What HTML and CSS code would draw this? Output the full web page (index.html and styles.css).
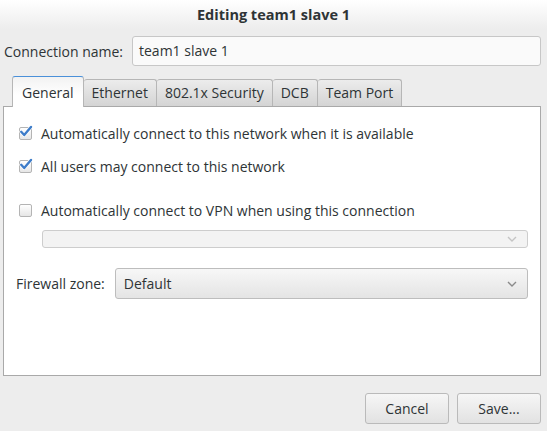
FILE: index.html
```html
<!DOCTYPE html>
<html>
<head>
<meta charset="utf-8">
<link rel="stylesheet" href="styles.css">
</head>
<body>
<div class="window">
  <div class="titlebar">Editing team1 slave 1</div>
  <div class="name-row">
    <span class="label">Connection name:</span>
    <div class="entry">team1 slave 1</div>
  </div>
  <div class="tabs">
    <div class="tab active">General</div>
    <div class="tab">Ethernet</div>
    <div class="tab">802.1x Security</div>
    <div class="tab">DCB</div>
    <div class="tab">Team Port</div>
  </div>
  <div class="panel">
    <div class="check-row first">
      <span class="cb checked"><svg width="14" height="13" viewBox="0 0 14 13"><path d="M2.2 6.8 L5.2 10 L12 2" fill="none" stroke="#ffffff" stroke-width="3.6" stroke-linecap="round" stroke-linejoin="round"/><path d="M2.2 6.8 L5.2 10 L12 2" fill="none" stroke="#3d7cc9" stroke-width="2.4" stroke-linecap="round" stroke-linejoin="round"/></svg></span>
      <span>Automatically connect to this network when it is available</span>
    </div>
    <div class="check-row second">
      <span class="cb checked"><svg width="14" height="13" viewBox="0 0 14 13"><path d="M2.2 6.8 L5.2 10 L12 2" fill="none" stroke="#ffffff" stroke-width="3.6" stroke-linecap="round" stroke-linejoin="round"/><path d="M2.2 6.8 L5.2 10 L12 2" fill="none" stroke="#3d7cc9" stroke-width="2.4" stroke-linecap="round" stroke-linejoin="round"/></svg></span>
      <span>All users may connect to this network</span>
    </div>
    <div class="check-row third">
      <span class="cb"></span>
      <span>Automatically connect to VPN when using this connection</span>
    </div>
    <div class="combo disabled">
      <span></span>
      <svg class="arrow" width="10" height="6" viewBox="0 0 10 6"><path d="M1 1 L5 5 L9 1" fill="none" stroke="#c4c4c4" stroke-width="1.4"/></svg>
    </div>
    <div class="fw-row">
      <span class="label">Firewall zone:</span>
      <div class="combo fw">
        <span>Default</span>
        <svg class="arrow" width="10" height="6" viewBox="0 0 10 6"><path d="M1 1 L5 5 L9 1" fill="none" stroke="#8a8a8a" stroke-width="1.4"/></svg>
      </div>
    </div>
  </div>
  <div class="buttons">
    <div class="btn">Cancel</div>
    <div class="btn">Save...</div>
  </div>
</div>
</body>
</html>
```

FILE: styles.css
```css
html, body {
  margin: 0;
  padding: 0;
  background: #ededed;
}
body {
  font-family: "Open Sans", "DejaVu Sans", sans-serif;
  font-size: 14px;
  color: #2e3436;
  width: 547px;
  height: 431px;
  overflow: hidden;
}
.window {
  display: flex;
  flex-direction: column;
}
.titlebar {
  height: 29px;
  line-height: 29px;
  text-align: center;
  font-weight: bold;
  font-size: 14.5px;
  background: linear-gradient(#ffffff, #ededed);
  color: #2e3436;
}
.name-row {
  display: flex;
  align-items: center;
  padding: 7px 6px 0 4px;
  gap: 9px;
}
.entry {
  flex: 1;
  height: 28px;
  line-height: 28px;
  border: 1px solid #c7c7c7;
  border-radius: 3px;
  background: #fafafa;
  padding-left: 6px;
  color: #2e3436;
}
.tabs {
  display: flex;
  align-items: flex-end;
  padding-left: 12px;
  margin-top: 10px;
  height: 30px;
  position: relative;
  z-index: 1;
}
.tab {
  height: 26px;
  line-height: 26px;
  padding: 0 8px;
  border: 1px solid #b6b6b6;
  border-bottom: none;
  border-left: none;
  border-radius: 3px 3px 0 0;
  background: linear-gradient(#ececec, #d4d4d4);
  color: #2e3436;
}
.tab.active {
  height: 30px;
  line-height: 32px;
  padding: 0 9px;
  border: 1px solid #b6b6b6;
  border-top: 1px solid #4a90d9;
  border-bottom: none;
  background: linear-gradient(#f2f2f2, #ffffff 60%);
  margin-bottom: -1px;
}
.panel {
  margin: 0 6px 0 3px;
  height: 268px;
  background: #ffffff;
  border: 1px solid #a9a9a9;
  display: flex;
  flex-direction: column;
}
.check-row {
  display: flex;
  align-items: center;
  padding-left: 15px;
  gap: 9px;
  height: 20px;
}
.check-row.first { margin-top: 16px; }
.check-row.second { margin-top: 13px; }
.check-row.third { margin-top: 24px; }
.cb {
  width: 11px;
  height: 11px;
  border: 1px solid #b4b4b4;
  border-radius: 2px;
  background: linear-gradient(#ffffff, #e6e6e6);
  position: relative;
  flex: none;
}
.cb svg {
  position: absolute;
  left: -1px;
  top: -3px;
}
.combo {
  display: flex;
  align-items: center;
  justify-content: space-between;
  border: 1px solid #bdbdbd;
  border-radius: 3px;
  padding: 0 10px 0 8px;
}
.combo.disabled {
  margin: 10px 12px 0 38px;
  height: 16px;
  background: #f3f3f3;
  border-color: #cdcdcd;
}
.fw-row {
  display: flex;
  align-items: center;
  margin: 20px 12px 0 12px;
  gap: 10px;
}
.combo.fw {
  flex: 1;
  height: 29px;
  background: linear-gradient(#f7f7f7, #e4e4e4);
}
.arrow { flex: none; }
.buttons {
  display: flex;
  justify-content: flex-end;
  gap: 8px;
  padding: 17px 6px 0 0;
}
.btn {
  height: 29px;
  line-height: 29px;
  text-align: center;
  border: 1px solid #bababa;
  border-radius: 3px;
  background: linear-gradient(#f6f6f6, #e2e2e2);
  color: #2e3436;
  width: 82px;
}
```
